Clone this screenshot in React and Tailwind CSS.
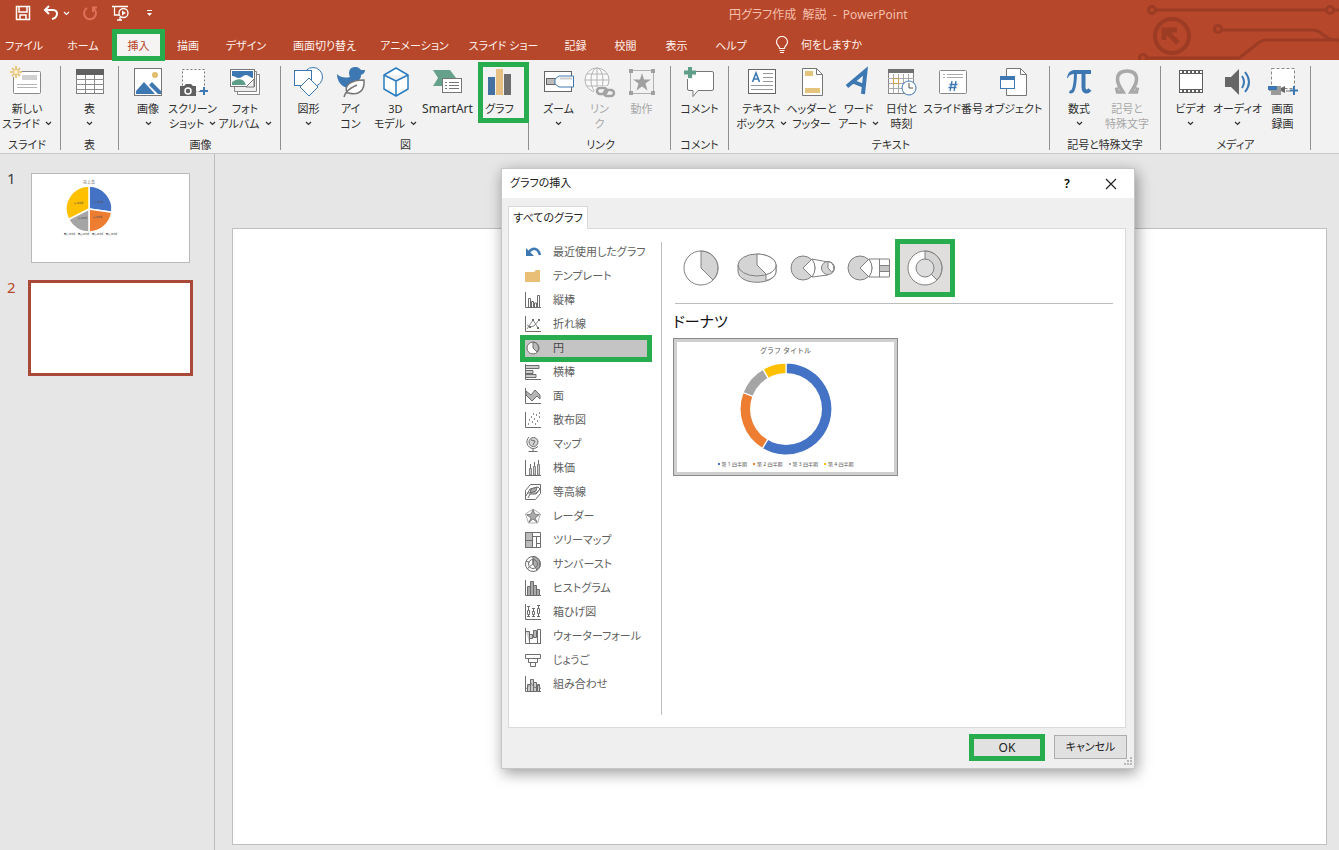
import { useState } from "react";

const TABS = [
  { label: "ファイル", width: "w-12 mr-1.5" },
  { label: "ホーム", width: "w-[58px]" },
  { label: "挿入", width: "w-[53px]" },
  { label: "描画", width: "w-[46px]" },
  { label: "デザイン", width: "w-[70px]" },
  { label: "画面切り替え", width: "w-[87px]" },
  { label: "アニメーション", width: "w-[93px]" },
  { label: "スライド ショー", width: "w-[85px]" },
  { label: "記録", width: "w-[59px]" },
  { label: "校閲", width: "w-[41px]" },
  { label: "表示", width: "w-[61px]" },
  { label: "ヘルプ", width: "w-12" },
];

const BLUE = "#3e78b3";
const GRAY = "#6d6d6d";

const RIBBON_ICONS = {
  newSlide: (
    <>
      <rect x="2.5" y="5.5" width="27" height="22" rx="1" fill="#fff" stroke="#8a8a8a" />
      <rect x="11" y="9" width="15" height="5" fill="#d0d0d0" />
      <path d="M6 18.500h20M6 21.500h20" stroke="#b5b5b5" />
      <circle cx="5" cy="6" r="5.500" fill="#f1f1f1" />
      <path d="M5 0v12M-1 6h12M1 2l8 8M9 2l-8 8" stroke="#e8bd62" strokeWidth="1.600" />
      <circle cx="5" cy="6" r="2" fill="#fff3d0" />
    </>
  ),
  table: (
    <>
      <rect x="2.5" y="3.5" width="27" height="24" fill="#fff" stroke="#808080" />
      <rect x="2" y="3" width="28" height="6" fill="#606060" />
      <path d="M2 13.500h28M2 18.500h28M2 23.500h28M11.500 9v18M20.500 9v18" stroke="#8c8c8c" />
    </>
  ),
  picture: (
    <>
      <rect x="2.500" y="2.500" width="27" height="27" fill="#fff" stroke="#777" />
      <circle cx="23" cy="9" r="3" fill="#e2bd6c" />
      <path d="M4 28v-3l8-9 11 12zM17 19l3-3 9 9v3h-3z" fill={BLUE} />
    </>
  ),
  screenshot: (
    <>
      <rect x="5.500" y="3.500" width="22" height="22" fill="#fff" stroke="#777" strokeDasharray="2 2" />
      <path d="M3 20h4l2-2h5l2 2h3v10H3z" fill="#606060" />
      <circle cx="11" cy="25" r="3" fill="none" stroke="#fff" strokeWidth="1.500" />
      <path d="M27 21v8M23 25h8" stroke={BLUE} strokeWidth="2" />
    </>
  ),
  album: (
    <>
      <path d="M8.500 24v4.500h22v-20H28" fill="#fff" stroke="#888" />
      <path d="M5.500 21v4.500h22v-20H26" fill="#eee" stroke="#888" />
      <rect x="1.500" y="3.500" width="24" height="17" fill="#fff" stroke="#777" />
      <path d="M3 5h21v7c-3 0-4-3-7-3s-4 3-7 3-4-2-7-2z" fill={BLUE} />
      <path d="M3 16c4-3 8-4 12-1l2 4H3z" fill="#5d9e88" />
      <path d="M17 21l8-8v8z" fill="#f1f1f1" stroke="#777" />
    </>
  ),
  shapes: (
    <>
      <circle cx="20" cy="11" r="9.500" fill="#fff" stroke={BLUE} />
      <rect x="1.500" y="4.500" width="17" height="15" fill="#fff" stroke={BLUE} />
      <path d="M16 12l9 9-9 9-9-9z" fill="#fff" stroke={BLUE} />
    </>
  ),
  icons: (
    <>
      <path
        d="M2 8c4 4 8 4 13 3-2-4-1-10 5-10 4 0 5 2 6 3h4c0 3-2 4-4 5 0 3-1 4-3 6-7 0-10 4-11 7C6 20 2 15 2 8z"
        fill={BLUE}
      />
      <path d="M12 27c-3-8 4-13 17-13 1 10-5 16-15 13z" fill="#fff" stroke="#777" strokeWidth="1.500" />
      <path d="M9 31c1-5 6-9 13-12" stroke="#777" strokeWidth="1.500" />
    </>
  ),
  cube: (
    <path
      d="M16 2l12 7v14l-12 7-12-7V9zM4 9l12 6 12-6M16 15v15"
      fill="#fff"
      stroke="#2c7dc0"
      strokeWidth="1.500"
      strokeLinejoin="round"
    />
  ),
  smartArt: (
    <>
      <path d="M1 4h17l6 8-6 8H1l5-8z" fill="#66a18b" />
      <rect x="10.500" y="12.500" width="19" height="14" fill="#fff" stroke="#777" />
      <path d="M13 16.500h2M13 19.500h2M13 22.500h2M17 16.500h10M17 19.500h10M17 22.500h10" stroke="#777" />
    </>
  ),
  chart: (
    <>
      <rect x="4" y="11" width="7" height="18" fill="#44719f" />
      <rect x="12" y="3" width="7" height="26" fill="#e6c183" />
      <rect x="20" y="8" width="7" height="21" fill="#6e6e6e" />
    </>
  ),
  zoom: (
    <>
      <rect x="1.500" y="5.500" width="27" height="20" fill="#fff" stroke="#666" />
      <rect x="3.500" y="12.500" width="9" height="6" fill="#bcbcbc" stroke="#666" />
      <path d="M12 13l4-3h14.500v11H16l-4-3z" fill="#fff" stroke={BLUE} />
      <path d="M17 12.500h12" stroke="#ccc" strokeWidth="2" />
    </>
  ),
  link: (
    <>
      <g fill="#fafafa" stroke="#b4b4b4">
        <circle cx="13" cy="14" r="12" />
        <ellipse cx="13" cy="14" rx="6" ry="12" />
        <path d="M13 2v24M1 14h24M3 8h20M3 20h20" />
      </g>
      <rect x="10" y="20" width="22" height="12" rx="6" fill="#f2f2f2" />
      <g fill="none" stroke="#a2a2a2" strokeWidth="2.500">
        <rect x="13" y="22" width="10" height="6" rx="3" />
        <rect x="20" y="24" width="10" height="6" rx="3" />
      </g>
    </>
  ),
  action: (
    <>
      <rect x="4.500" y="4.500" width="23" height="23" fill="none" stroke="#b0b0b0" />
      <path d="M3 3h4v4H3zM25 3h4v4h-4zM3 25h4v4H3zM25 25h4v4h-4z" fill="#a0a0a0" />
      <path d="M16 7l2 6.500h7l-5.500 4 2 7-5.500-4-5.500 4 2-7-5.500-4h7z" fill="#a0a0a0" />
    </>
  ),
  comment: (
    <>
      <path
        d="M5 5.500h23q1.500 0 1.500 1.500v16q0 1.500-1.500 1.500H14l-5 6v-6H5q-1.500 0-1.500-1.500V7q0-1.500 1.500-1.500z"
        fill="#fff"
        stroke="#777"
      />
      <path d="M6 1v12M0 7h12" stroke="#f1f1f1" strokeWidth="6" />
      <path d="M6 1v11M0 6.500h12" stroke="#5f9e88" strokeWidth="4" />
    </>
  ),
  textBox: (
    <>
      <rect x="2.500" y="3.500" width="27" height="24" fill="#fff" stroke="#666" />
      <path d="M6.500 16l3.500-9 3.500 9M7.500 13h5" fill="none" stroke={BLUE} strokeWidth="1.600" />
      <path d="M17 7.500h10M17 11.500h10M17 15.500h10M5 19.500h22M5 23.500h22" stroke="#999" />
    </>
  ),
  headerFooter: (
    <>
      <path d="M6.500 2.500h14l6 6v21h-20z" fill="#fff" stroke="#777" />
      <path d="M20.500 2.500v6h6" fill="none" stroke="#777" />
      <path d="M9 5h8v5H9zM9 22h15v5H9z" fill="#e4c47c" />
    </>
  ),
  wordArt: <path d="M4 20.500L22.500 5 20 28M11 16l10 4" fill="none" stroke={BLUE} strokeWidth="4" />,
  date: (
    <>
      <rect x="2.500" y="3.500" width="25" height="24" fill="#fff" stroke="#888" />
      <rect x="2" y="3" width="26" height="4" fill="#707070" />
      <path d="M2 12.500h26M2 17.500h26M2 22.500h26M7.500 8v19M12.500 8v19M17.500 8v19M22.500 8v19" stroke="#aaa" />
      <rect x="7.500" y="12.500" width="5" height="5" fill="none" stroke="#db9b50" />
      <circle cx="23" cy="22" r="7" fill="#fff" stroke={BLUE} />
      <path d="M23 17v5h4" fill="none" stroke="#555" />
    </>
  ),
  slideNumber: (
    <>
      <rect x="2.500" y="4.500" width="27" height="23" rx="1" fill="#fff" stroke="#888" />
      <path d="M6 8.500h2M10 8.500h16M6 11.500h2M10 11.500h16" stroke="#aaa" />
      <path d="M15 15l-2 10M19 15l-2 10M12.500 18.500h8M11.500 21.500h8" stroke={BLUE} strokeWidth="1.300" />
    </>
  ),
  object: (
    <>
      <path d="M8.500 2.500h14l6 6v21h-20z" fill="#fff" stroke="#777" />
      <path d="M22.500 2.500v6h6" fill="none" stroke="#777" />
      <rect x="2.500" y="10.500" width="14" height="12" fill="#fff" stroke={BLUE} />
      <rect x="2" y="10" width="15" height="4" fill={BLUE} />
    </>
  ),
  equation: (
    <>
      <path
        d="M4 12c1-6 4-8 8-8h16v4H12c-4 0-6 1-7 4z"
        fill={BLUE}
      />
      <path d="M12.500 6c0 9-.5 14-2.500 18.500q-1.500 2-3.500 1" stroke={BLUE} strokeWidth="3" />
      <path d="M20.500 6v15c0 5 3.500 6 6.500 2.500" stroke={BLUE} strokeWidth="4" />
    </>
  ),
  symbol: (
    <path
      d="M5.500 21.500l1 4.500h5.500C9 21 6.500 19 6.500 13.500 6.500 8 10 5 16 5s9.500 3 9.500 8.500C25.500 19 23 21 20 26h5.500l1-4.500"
      fill="none"
      stroke="#a9a9a9"
      strokeWidth="3.500"
    />
  ),
  video: (
    <>
      <rect x="4" y="4" width="24" height="23" fill="#5d5d5d" />
      <rect x="5" y="8" width="22" height="15" fill="#fff" />
      <path d="M5 6h22M5 25h22" stroke="#fff" strokeWidth="2" strokeDasharray="2 2" />
    </>
  ),
  audio: (
    <>
      <path d="M3 11h6l8-8v26l-8-8H3z" fill="#666" />
      <path d="M20 10q4 6 0 12M23 6q8 10 0 20" fill="none" stroke={BLUE} strokeWidth="2" />
    </>
  ),
  screenRecord: (
    <>
      <rect x="4.500" y="2.500" width="23" height="20" fill="#fff" stroke="#888" strokeDasharray="3 2" />
      <path d="M2 20h12v9H4v-4H2z" fill="#9a9a9a" />
      <path d="M1 20h9v4H1z" fill={BLUE} />
      <path d="M14 22l4-2v7l-4-2z" fill="#666" />
      <path d="M19 25h4" stroke="#777" />
      <path d="M27 20v9M23 24.500h8" stroke={BLUE} strokeWidth="2" />
    </>
  ),
};

const GROUPS = [
  {
    label: "スライド",
    box: "w-[61px] pr-1.5",
    items: [{ icon: "newSlide", lines: ["新しい", "スライド"], menu: true, width: "w-[54px]" }],
  },
  {
    label: "表",
    box: "w-[58px]",
    items: [{ icon: "table", lines: ["表"], menu: true, width: "w-[57px]" }],
  },
  {
    label: "画像",
    box: "w-[162px] pl-0.5",
    items: [
      { icon: "picture", lines: ["画像"], menu: true, width: "w-[42px]" },
      { icon: "screenshot", lines: ["スクリーン", "ショット"], menu: true, width: "w-[47px]" },
      { icon: "album", lines: ["フォト", "アルバム"], menu: true, width: "w-[58px]" },
    ],
  },
  {
    label: "図",
    box: "w-[248px] pl-0.5",
    items: [
      { icon: "shapes", lines: ["図形"], menu: true, width: "w-[38px]" },
      { icon: "icons", lines: ["アイ", "コン"], width: "w-[46px]" },
      { icon: "cube", lines: ["3D", "モデル"], menu: true, width: "w-11" },
      { icon: "smartArt", lines: ["SmartArt"], width: "w-[60px]" },
      { icon: "chart", lines: ["グラフ"], width: "w-11", marked: true },
    ],
  },
  {
    label: "リンク",
    box: "w-[142px] pl-0.5",
    items: [
      { icon: "zoom", lines: ["ズーム"], menu: true, width: "w-[39px]" },
      { icon: "link", lines: ["リン", "ク"], width: "w-[43px]", disabled: true },
      { icon: "action", lines: ["動作"], width: "w-[41px]", disabled: true },
    ],
  },
  {
    label: "コメント",
    box: "w-[58px]",
    items: [{ icon: "comment", lines: ["コメント"], width: "w-[57px]" }],
  },
  {
    label: "テキスト",
    box: "w-[321px] pl-1",
    items: [
      { icon: "textBox", lines: ["テキスト", "ボックス"], menu: true, width: "w-12" },
      { icon: "headerFooter", lines: ["ヘッダーと", "フッター"], width: "w-[52px]" },
      { icon: "wordArt", lines: ["ワード", "アート"], menu: true, width: "w-[42px]" },
      { icon: "date", lines: ["日付と", "時刻"], width: "w-11" },
      { icon: "slideNumber", lines: ["スライド番号"], width: "w-[59px]" },
      { icon: "object", lines: ["オブジェクト"], width: "w-[62px]" },
    ],
  },
  {
    label: "記号と特殊文字",
    box: "w-[111px]",
    items: [
      { icon: "equation", lines: ["数式"], menu: true, width: "w-11" },
      { icon: "symbol", lines: ["記号と", "特殊文字"], width: "w-[52px]", disabled: true },
    ],
  },
  {
    label: "メディア",
    box: "w-[150px]",
    items: [
      { icon: "video", lines: ["ビデオ"], menu: true, width: "w-11" },
      { icon: "audio", lines: ["オーディオ"], menu: true, width: "w-[50px]" },
      { icon: "screenRecord", lines: ["画面", "録画"], width: "w-10" },
    ],
  },
];

const AXES = <path d="M.5 0v15.500H16" />;

const CHART_TYPES = [
  {
    label: "最近使用したグラフ",
    icon: (
      <>
        <path d="M4 8c4-5 9-4 11 3" stroke={BLUE} strokeWidth="2.500" />
        <path d="M1 4v8h8z" fill={BLUE} stroke="none" />
      </>
    ),
  },
  { label: "テンプレート", icon: <path d="M0 4h9l2-2h4v12H0z" fill="#e9bf78" stroke="none" /> },
  {
    label: "縦棒",
    icon: (
      <>
        {AXES}
        <path d="M3.500 15V6.500h2V15M6.500 15V9.500h2V15M9.500 15v-4h2v4M12.500 15V3.500h2V15" />
      </>
    ),
  },
  {
    label: "折れ線",
    icon: (
      <>
        {AXES}
        <path d="M2 13l6-9 5 8M2 9l3 2 4-1 5-6" strokeWidth=".8" />
        <path d="M7 3h2v2H7zM12 11h2v2h-2zM13 3h2v2h-2zM4 10h2v2H4z" fill={GRAY} stroke="none" />
      </>
    ),
  },
  {
    label: "円",
    icon: (
      <>
        <circle cx="8" cy="8" r="6" fill="#fff" />
        <path d="M8 2v6l4 4a6 6 0 0 0-4-10z" fill="#bbb" />
      </>
    ),
  },
  {
    label: "横棒",
    icon: (
      <>
        {AXES}
        <path d="M1 1.500h13v3H1M1 6.500h7v3H1M1 10.500h10v3H1" fill="#ccc" />
      </>
    ),
  },
  {
    label: "面",
    icon: (
      <>
        {AXES}
        <path d="M1 3l5 4 4-5 5 5v4l-3-3-5 5-6-6z" fill="#b5b5b5" />
      </>
    ),
  },
  {
    label: "散布図",
    icon: (
      <>
        {AXES}
        <path
          d="M3 12h1M4 8h1M7 10h1M6 5h1M9 7h1M11 3h1M12 9h1M14 5h1M10 12h1M14 1h1M8 2h1"
          strokeWidth="1.500"
        />
      </>
    ),
  },
  {
    label: "マップ",
    icon: (
      <>
        <circle cx="8.500" cy="6" r="4.500" fill="#d5d5d5" />
        <path d="M4 1C0 5 2 12 8 12.500q3 0 5-2M8 12.500v3M3.500 15.500h9M6 4l4 1-2 4" />
      </>
    ),
  },
  {
    label: "株価",
    icon: (
      <>
        {AXES}
        <path d="M5.500 4v11M9.500 2v4M13.500 0v4" />
        <path d="M4.500 8.500h2V15h-2zM8.500 6.500h2V15h-2zM12.500 4.500h2V15h-2z" fill="#ccc" strokeWidth=".8" />
      </>
    ),
  },
  {
    label: "等高線",
    icon: (
      <>
        <path d="M.5 6.500l5-6h10v9l-5 6H.5zM1 12l4-7 8-2 2 2M3 14l2-4h6l4-5M2 9h9l4-4" />
        <path d="M6 5l6-2-1 4-6 2z" fill="#aaa" />
      </>
    ),
  },
  {
    label: "レーダー",
    icon: (
      <>
        <path d="M8 1l7.500 5-3 9h-9l-3-9zM8 9V1M8 9l7-3M8 9l4 6M8 9l-4 6M8 9L1 6" stroke="#999" strokeWidth=".8" />
        <path d="M8 2l2 4 4 1-4 3 2 4-4-3-4 3 2-4-4-3 4-1z" fill="#aaa" strokeWidth=".8" />
      </>
    ),
  },
  {
    label: "ツリーマップ",
    icon: (
      <>
        <path d="M.5.500h15v15H.5z" fill="#fff" />
        <path d="M.5.500h7v15h-7z" fill="#bbb" />
        <path d="M.5 8.500h7M7.500 4.500h8M11.500 4.500v11M11.500 11.500h4" />
      </>
    ),
  },
  {
    label: "サンバースト",
    icon: (
      <>
        <circle cx="8" cy="8" r="7.500" fill="#fff" />
        <path d="M8 .500A7.500 7.500 0 0 1 12 14L8 8z" fill="#aaa" />
        <circle cx="8" cy="8" r="4.500" />
        <path d="M8 8l-4 3M8 8V3.500M1 5l3.500 1.500M4 11l-1.500 2" />
      </>
    ),
  },
  {
    label: "ヒストグラム",
    icon: (
      <>
        {AXES}
        <path d="M2.500 15V6.500h3V15M5.500 15V1.500h3V15M8.500 15V5.500h3V15M11.500 15V9.500h3V15" fill="#aaa" />
      </>
    ),
  },
  {
    label: "箱ひげ図",
    icon: (
      <>
        {AXES}
        <path d="M3.500 2v11M8.500 4v9M13.500 1v12M2 2.500h3M7 4.500h3M12 1.500h3M2 12.500h3M7 12.500h3M12 12.500h3" />
        <path d="M2.500 6.500h2v4h-2zM7.500 7.500h2v3h-2zM12.500 4.500h2v5h-2z" fill="#fff" />
      </>
    ),
  },
  {
    label: "ウォーターフォール",
    icon: (
      <>
        {AXES}
        <path d="M1 3.500h3.500V15M4.500 6.500h3v4h-3" fill="#ccc" />
        <path d="M8.500 2.500h3v7h-3z" fill="#bbb" />
        <path d="M12.500 1.500h3v14h-3z" />
      </>
    ),
  },
  { label: "じょうご", icon: <path d="M.5 2.500h15v4H.5zM3.500 6.500h9v4h-9zM5.500 10.500h5v4h-5z" /> },
  {
    label: "組み合わせ",
    icon: (
      <>
        {AXES}
        <path d="M2.500 15V8.500h3V15M5.500 15V3.500h3V15M8.500 15V6.500h3V15M12.500 15V8.500h2V15" fill="#ccc" />
        <path d="M1 13l5-6 4 5 3-3 3 4" strokeWidth=".8" />
      </>
    ),
  },
];

const PIE_TYPES = [
  {
    label: "円",
    icon: (
      <>
        <circle cx="22" cy="22" r="17" fill="#fff" />
        <path d="M22 5v17l12 12A17 17 0 0 0 22 5z" fill="#d4d4d4" />
      </>
    ),
  },
  {
    label: "3-D 円",
    icon: (
      <>
        <path d="M3 19v6c0 15 38 15 38 0v-6z" fill="#d4d4d4" />
        <path d="M31 28v6.500c7-2 10-5 10-9.500v-6z" fill="#fff" />
        <ellipse cx="22" cy="19" rx="19" ry="11" fill="#d4d4d4" />
        <path d="M22 8v11l9.500 9.500C36 27 41 24 41 19 41 13 32 8 22 8z" fill="#fff" />
      </>
    ),
  },
  {
    label: "補助円グラフ付き円",
    icon: (
      <>
        <circle cx="12" cy="22" r="12" fill="#d4d4d4" />
        <path d="M12 22l9-9q6 9 0 18z" fill="#fff" />
        <path d="M21 13l16 3M21 31l16-2" />
        <circle cx="37" cy="22" r="6.500" fill="#d4d4d4" />
        <path d="M37 22v-6.500a6.500 6.500 0 0 1 4 11z" fill="#fff" />
      </>
    ),
  },
  {
    label: "補助縦棒付き円",
    icon: (
      <>
        <circle cx="13" cy="22" r="12" fill="#d4d4d4" />
        <path d="M13 22l9-9q6 9 0 18z" fill="#fff" />
        <path d="M22 13h20M22 31h20M32.500 13v18M42.500 13v18" />
        <path d="M32.500 19.500h10v6h-10z" fill="#c4c4c4" />
      </>
    ),
  },
  {
    label: "ドーナツ",
    icon: (
      <>
        <circle cx="22" cy="22" r="17" fill="#fff" />
        <path d="M22 5v17l12 12A17 17 0 0 0 22 5z" fill="#d4d4d4" />
        <circle cx="22" cy="22" r="9" fill="#dedede" />
      </>
    ),
  },
];

const QUARTERS = [
  { label: "第 1 四半期", color: "#4472c4", dot: "bg-[#4472c4]", donut: [0, 211], pie: [0, 98] },
  { label: "第 2 四半期", color: "#ed7d31", dot: "bg-[#ed7d31]", donut: [211, 291], pie: [98, 180] },
  { label: "第 3 四半期", color: "#a5a5a5", dot: "bg-[#a5a5a5]", donut: [291, 330], pie: [180, 243] },
  { label: "第 4 四半期", color: "#ffc000", dot: "bg-[#ffc000]", donut: [330, 360], pie: [243, 360] },
];

// Slice of a circle, angles in degrees clockwise from the top
function slicePath(cx, cy, r, from, to) {
  const point = (deg) => {
    const a = ((deg - 90) * Math.PI) / 180;
    return `${cx + r * Math.cos(a)} ${cy + r * Math.sin(a)}`;
  };
  return `M${cx} ${cy}L${point(from)}A${r} ${r} 0 ${to - from > 180 ? 1 : 0} 1 ${point(to)}Z`;
}

function Marker({ className }) {
  return (
    <span className={`pointer-events-none absolute z-10 border-[5px] border-[#27ad4d] ${className}`} />
  );
}

function Chevron({ className = "" }) {
  return (
    <svg viewBox="0 0 7 5" fill="none" stroke="currentColor" className={`inline-block h-[5px] w-[7px] ${className}`}>
      <path d="M1 1l2.500 2.500L6 1" strokeWidth="1.200" />
    </svg>
  );
}

function TitleBar() {
  return (
    <div className="flex h-[30px] items-center text-white">
      <div className="flex w-[729px] shrink-0 items-center pl-[15px]">
        <button aria-label="上書き保存">
          <svg viewBox="0 0 16 16" fill="none" stroke="currentColor" strokeWidth="1.500" className="mt-[-4px] size-4">
            <path d="M1.500 1.500h13v13h-13zM4 2v5h8V2M5 14v-4h6v4" />
          </svg>
        </button>
        <button aria-label="元に戻す" className="ml-3 flex items-center gap-1">
          <svg viewBox="0 0 16 16" fill="none" stroke="currentColor" strokeWidth="2" className="mt-[-4px] size-4">
            <path d="M6 1L2 5l4 4M2 5h8c6 0 5 8-1 9" />
          </svg>
          <Chevron className="-mt-1" />
        </button>
        <button aria-label="やり直し" className="ml-3 text-[#df705a]" disabled>
          <svg viewBox="0 0 16 16" fill="none" stroke="currentColor" strokeWidth="2" className="mt-[-4px] size-4">
            <path d="M5 3a6 6 0 1 0 6 0M11 7V2.500h4" />
          </svg>
        </button>
        <button aria-label="最初から開始" className="ml-3.5">
          <svg viewBox="0 0 18 16" fill="none" stroke="currentColor" strokeWidth="1.300" className="mt-[-4px] h-4 w-[18px]">
            <path d="M0 1.500h16M2.500 2v8H7M5 15h5M8 12v3" />
            <circle cx="11.500" cy="8" r="4.500" />
            <path d="M10 5.500v5l4-2.500z" fill="currentColor" stroke="none" />
          </svg>
        </button>
        <button aria-label="クイック アクセス ツール バーのユーザー設定" className="ml-4">
          <svg viewBox="0 0 7 8" fill="none" stroke="currentColor" className="mt-[-4px] h-2 w-[7px]">
            <path d="M1 1.500h5" />
            <path d="M1 4h5L3.500 7z" fill="currentColor" stroke="none" />
          </svg>
        </button>
      </div>
      <h1 className="text-[12px] whitespace-pre text-[#f5bfad]">円グラフ作成  解説  -  PowerPoint</h1>
    </div>
  );
}

function TabRow({ active, onSelect }) {
  return (
    <nav className="flex h-[30px] text-[11px] text-[#fff2ee]">
      {TABS.map((tab) => (
        <button
          key={tab.label}
          onClick={() => onSelect(tab.label)}
          className={`relative flex shrink-0 items-center justify-center pt-0.5 whitespace-nowrap ${tab.width} ${
            tab.label === active ? "bg-[#f6f4f3] text-[#b7472a]" : ""
          }`}
        >
          {tab.label}
          {tab.label === "挿入" && <Marker className="inset-x-0 -inset-y-px" />}
        </button>
      ))}
      <button className="ml-5 flex shrink-0 items-center gap-3">
        <svg viewBox="0 0 14 18" fill="none" stroke="currentColor" strokeWidth="1.200" className="h-[18px] w-3.5">
          <path d="M4.500 12.500c0-3-3-3-3-6.500a5.500 5.500 0 0 1 11 0c0 3.500-3 3.500-3 6.500zM4.500 14.500h5M5 16.500h4" />
        </svg>
        何をしますか
      </button>
    </nav>
  );
}

function Circuit() {
  return (
    <svg
      viewBox="0 0 204 60"
      fill="none"
      stroke="#9d3c24"
      strokeWidth="3"
      className="pointer-events-none absolute top-0 right-0 h-[60px] w-[204px]"
    >
      <circle cx="37" cy="36" r="17" strokeWidth="4" />
      <path d="M43 43L31 31M29 40V30h13" strokeWidth="5" />
      <circle cx="17" cy="10" r="3.500" />
      <path d="M21 10h170" />
      <circle cx="195" cy="10" r="3.500" />
      <path d="M199 10h5" />
      <circle cx="83" cy="29" r="3.500" />
      <path d="M87 30h90q6 0 10 4l6 4q3 2 11 2" />
      <circle cx="8" cy="58" r="3.500" />
      <path d="M12 58h92l18-14q5-4 10-4h72" />
    </svg>
  );
}

function RibbonButton({ item }) {
  const [first, second] = item.lines;
  return (
    <button
      disabled={item.disabled}
      className={`relative flex shrink-0 flex-col items-center whitespace-nowrap ${item.width} ${
        item.disabled ? "text-[#a8a8a8]" : "text-[#303030]"
      }`}
    >
      <svg viewBox="0 0 32 32" fill="none" className="mb-[3px] size-8 overflow-visible">
        {RIBBON_ICONS[item.icon]}
      </svg>
      <span className={`leading-[15px] ${item.icon === "smartArt" ? "text-[12px]" : ""}`}>{first}</span>
      <span className="flex h-[15px] items-center gap-[5px] leading-[15px]">
        {second}
        {item.menu && <Chevron />}
      </span>
      {item.marked && <Marker className="-top-1 left-0 h-[61px] w-[51px]" />}
    </button>
  );
}

function Ribbon() {
  return (
    <div className="flex h-[94px] border-b border-[#c9c9c9] bg-[#f2f2f2] pt-1.5 pb-[3px] text-[11px]">
      {GROUPS.map((group) => (
        <section
          key={group.label}
          className={`flex shrink-0 flex-col items-center justify-between border-r border-[#8f8f8f] ${group.box}`}
        >
          <div className="flex h-[66px]">
            {group.items.map((item) => (
              <RibbonButton key={item.icon} item={item} />
            ))}
          </div>
          <h2 className="leading-[10px] text-[#303030]">{group.label}</h2>
        </section>
      ))}
    </div>
  );
}

function SlideList() {
  return (
    <aside className="w-[215px] shrink-0 border-r border-[#bdbdbd] pt-[19px] text-[15px] leading-[18px]">
      <button className="flex w-full items-start pl-[7px] text-left text-[#404040]">
        <span className="-mt-1 w-6">1</span>
        <span className="flex h-[90px] w-[159px] flex-col items-start border border-[#b9b9b9] bg-white">
          <svg viewBox="0 0 120 70" className="h-[70px] w-[120px]">
            <text x="57" y="10" fontSize="4" textAnchor="middle" fill="#666">売上高</text>
            {QUARTERS.map((q) => (
              <path key={q.label} d={slicePath(57, 35, 23, ...q.pie)} fill={q.color} stroke="#fff" strokeWidth="1.500" />
            ))}
            <g fontSize="2" fill="#555">
              <text x="62" y="29">第1四半期</text>
              <text x="61" y="44">第2四半期</text>
              <text x="46" y="45">第3四半期</text>
              <text x="42" y="30">第4四半期</text>
              <text x="32" y="61">■第1四半期</text>
              <text x="46" y="61">■第2四半期</text>
              <text x="60" y="61">■第3四半期</text>
              <text x="74" y="61">■第4四半期</text>
            </g>
          </svg>
        </span>
      </button>
      <button className="mt-[17px] flex w-full items-start pl-[7px] text-left text-[#b7472a]">
        <span className="-mt-0.5 w-[21px]">2</span>
        <span className="h-24 w-[165px] border-[3px] border-[#a94a38] bg-white" />
      </button>
    </aside>
  );
}

function DonutPreview() {
  return (
    <button className="flex h-[138px] w-[225px] border border-[#8b8b8b] bg-[#cfcfcf] p-[3px]">
      <span className="flex flex-1 flex-col items-center bg-white pt-1 text-[#555]">
        <span className="text-[7px] leading-[10px] [font-feature-settings:normal]">グラフ タイトル</span>
        <svg viewBox="0 0 94 94" className="mt-1.5 size-[94px]">
          {QUARTERS.map((q) => (
            <path key={q.label} d={slicePath(47, 47, 46, ...q.donut)} fill={q.color} stroke="#fff" strokeWidth="1.200" />
          ))}
          <circle cx="47" cy="47" r="36" fill="#fff" />
        </svg>
        <span className="mt-1 flex gap-1.5 text-[5px] leading-2">
          {QUARTERS.map((q) => (
            <span key={q.label} className="flex items-center gap-0.5 whitespace-nowrap">
              <i className={`size-0.5 ${q.dot}`} />
              {q.label}
            </span>
          ))}
        </span>
      </span>
    </button>
  );
}

function InsertChartDialog() {
  const [type, setType] = useState("円");
  const [subtype, setSubtype] = useState("ドーナツ");

  return (
    <div
      role="dialog"
      aria-label="グラフの挿入"
      className="absolute top-[168px] left-[501px] w-[634px] border border-[#c6c6c6] bg-[#efefef] text-[11px] shadow-[2px_4px_14px_rgba(0,0,0,0.4)]"
    >
      <header className="flex h-[29px] items-center bg-white pr-[17px] pl-2">
        <h2 className="flex-1 text-[#222]">グラフの挿入</h2>
        <button aria-label="ヘルプ" className="w-11 text-center text-[12px] font-semibold">?</button>
        <button aria-label="閉じる" className="ml-4">
          <svg viewBox="0 0 12 12" stroke="#222" className="size-3">
            <path d="M1 1l10 10M11 1L1 11" strokeWidth="1.200" />
          </svg>
        </button>
      </header>

      <div className="pt-2 pr-2 pl-1.5">
        <button className="relative -mb-px flex h-[23px] w-20 items-center justify-center border border-b-0 border-[#d9d9d9] bg-white whitespace-nowrap text-[#222]">
          すべてのグラフ
        </button>
        <div className="flex h-[500px] border border-[#d9d9d9] bg-white">
          <ul className="w-[152px] shrink-0 pt-[11px] pl-[11px] text-[#606060]">
            {CHART_TYPES.map((c) => (
              <li key={c.label} className="relative flex h-6 w-[132px] items-center">
                <button
                  onClick={() => setType(c.label)}
                  className={`flex h-[22px] w-full items-center gap-3 pl-[5px] whitespace-nowrap ${
                    c.label === type ? "bg-[#c5c4c4] text-[#444]" : ""
                  }`}
                >
                  <svg viewBox="0 0 16 16" fill="none" stroke={GRAY} className="size-4 shrink-0">
                    {c.icon}
                  </svg>
                  {c.label}
                </button>
                {c.label === "円" && <Marker className="inset-x-0 -top-px h-[27px]" />}
              </li>
            ))}
          </ul>

          <div className="mt-[13px] mb-3 w-px bg-[#bdbdbd]" />

          <div className="flex-1 pt-[11px] pr-3 pl-[11px]">
            <div className="flex h-14 w-fit">
              {PIE_TYPES.map((p) => (
                <button
                  key={p.label}
                  aria-label={p.label}
                  onClick={() => setSubtype(p.label)}
                  className={`relative flex w-14 items-center justify-center ${
                    p.label === subtype ? "bg-[#dfdedd]" : ""
                  }`}
                >
                  <svg viewBox="0 0 44 44" fill="none" stroke="#808080" className="size-11 overflow-visible">
                    {p.icon}
                  </svg>
                  {p.label === "ドーナツ" && <Marker className="-inset-x-0.5 -inset-y-px" />}
                </button>
              ))}
            </div>
            <hr className="mt-[7px] ml-0.5 border-[#bcbcbc]" />
            <h3 className="my-1.5 text-[15px] leading-[22px] text-[#111]">ドーナツ</h3>
            <DonutPreview />
          </div>
        </div>
      </div>

      <footer className="relative flex h-10 items-start justify-end gap-[9px] pt-1.5 pr-[7px] text-[#222]">
        <button className="relative h-[27px] w-[76px] bg-[#e1e1e1] text-[12px]">
          OK
          <Marker className="inset-0" />
        </button>
        <button className="mt-px h-6 w-[73px] border border-[#adadad] bg-[#e1e1e1] whitespace-nowrap">
          キャンセル
        </button>
        <svg viewBox="0 0 9 9" fill="#b8b8b8" className="absolute right-0.5 bottom-0.5 size-[9px]">
          <path d="M7 0h2v2H7zM7 3h2v2H7zM4 3h2v2H4zM7 6h2v2H7zM4 6h2v2H4zM1 6h2v2H1z" />
        </svg>
      </footer>
    </div>
  );
}

export default function App() {
  const [tab, setTab] = useState("挿入");

  return (
    <div className="relative flex min-h-screen flex-col overflow-hidden bg-[#e6e6e6] font-['Noto_Sans','Noto_Sans_CJK_JP',sans-serif] [font-feature-settings:'palt']">
      <header className="relative bg-[#b7472a]">
        <Circuit />
        <TitleBar />
        <TabRow active={tab} onSelect={setTab} />
      </header>
      <Ribbon />
      <div className="flex flex-1">
        <SlideList />
        <main className="flex flex-1 pt-[74px] pr-3 pb-[5px] pl-[17px]">
          <div className="flex-1 border border-[#bfbfbf] bg-white" />
        </main>
      </div>
      <InsertChartDialog />
    </div>
  );
}
